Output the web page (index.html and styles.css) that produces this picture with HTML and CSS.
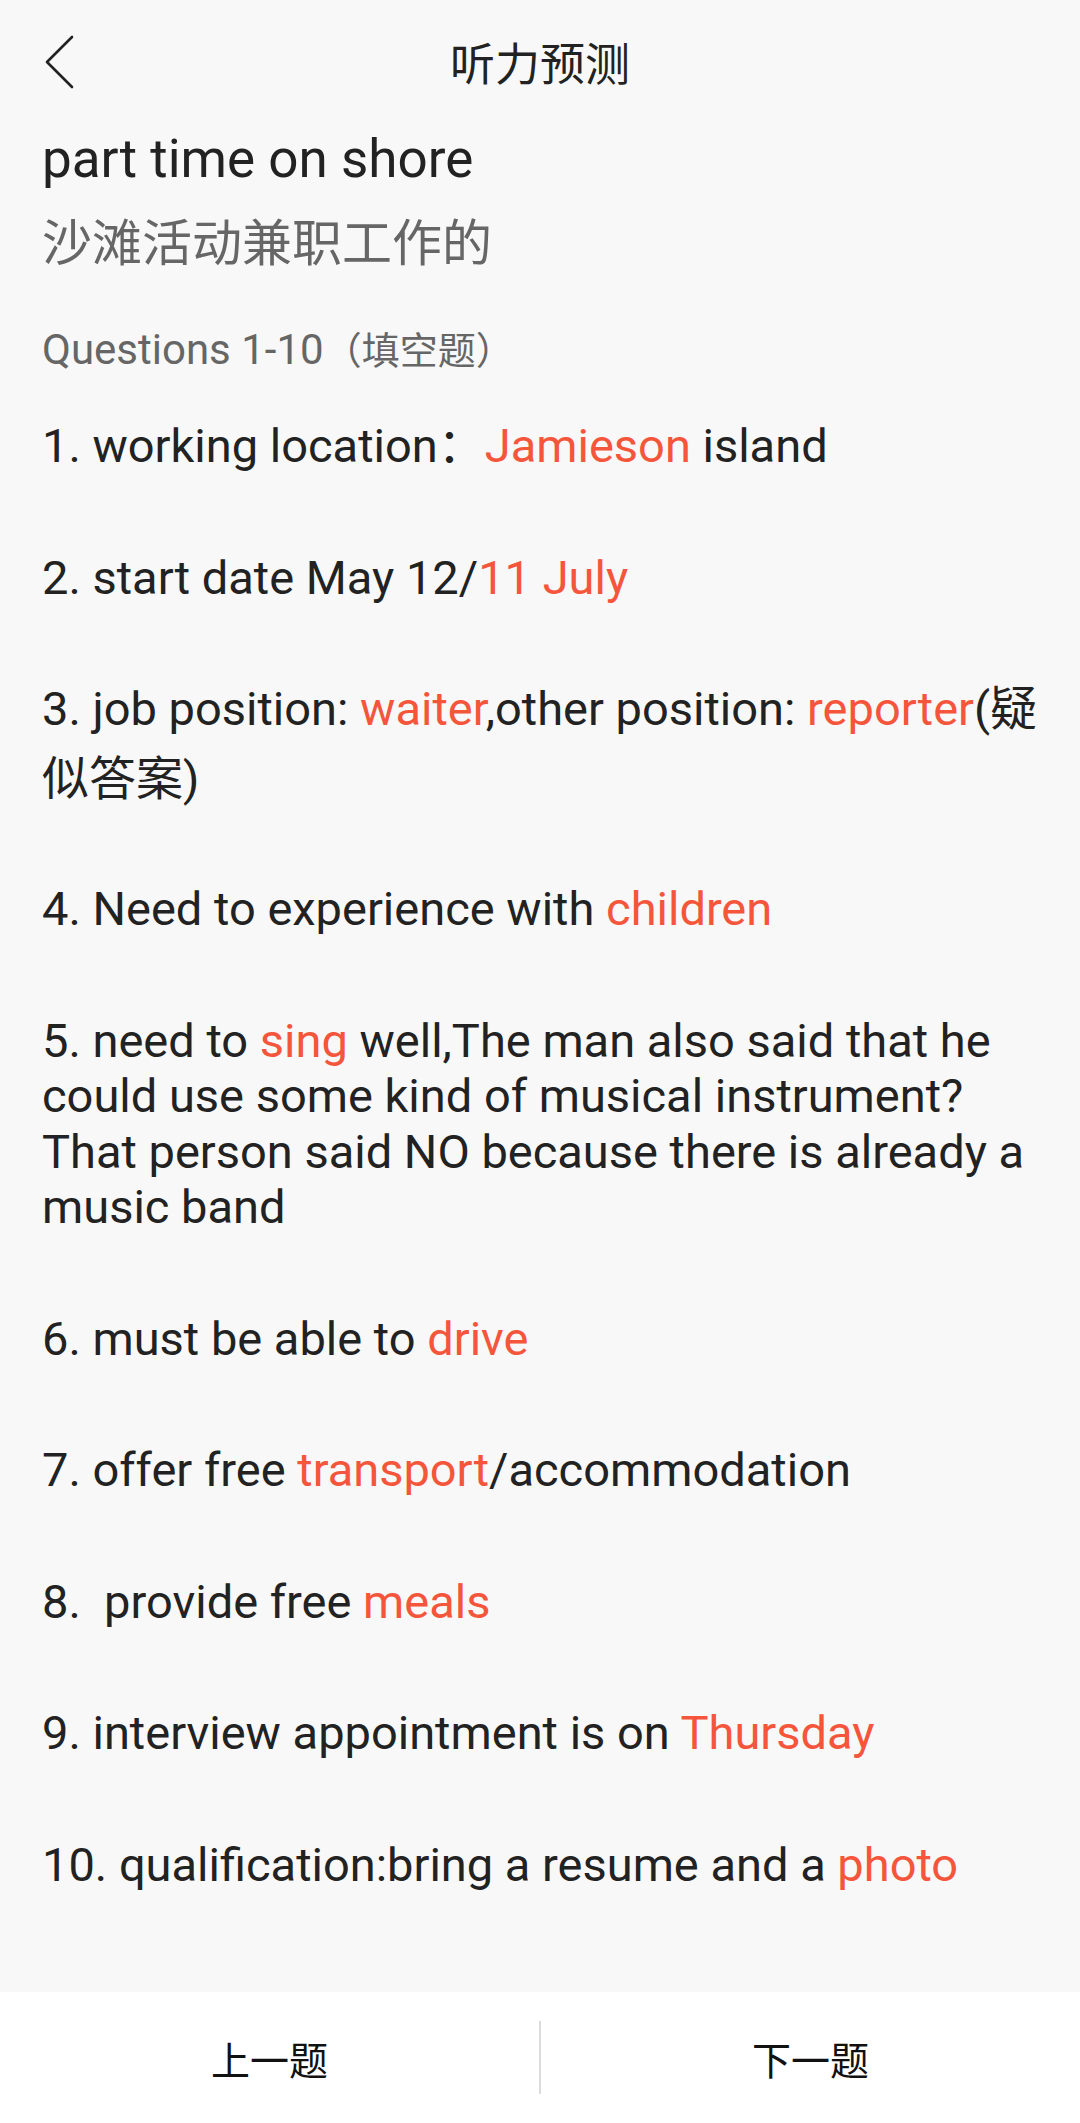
FILE: index.html
```html
<!DOCTYPE html>
<html lang="zh-CN">
<head>
<meta charset="utf-8">
<title>听力预测</title>
<link rel="stylesheet" href="styles.css">
</head>
<body>
<div class="page">
  <header class="topbar">
    <div class="back">
      <svg class="back-icon" width="30" height="54" viewBox="0 0 30 54" aria-hidden="true">
        <polyline points="27,2 2,27 27,52" fill="none" stroke="#222" stroke-width="2.6" stroke-linecap="round" stroke-linejoin="round"/>
      </svg>
    </div>
    <div class="title">听力预测</div>
    <div class="spacer"></div>
  </header>

  <main class="content">
    <h1 class="heading">part time on shore</h1>
    <div class="subtitle">沙滩活动兼职工作的</div>
    <div class="section">Questions 1-10<span class="section-cjk">（填空题）</span></div>

    <p class="item">1. working location：<span class="ans">Jamieson</span> island</p>
    <p class="item">2. start date May 12/<span class="ans">11 July</span></p>
    <p class="item item-cjk">3. job position: <span class="ans">waiter</span>,other position: <span class="ans">reporter</span>(疑似答案)</p>
    <p class="item">4. Need to experience with <span class="ans">children</span></p>
    <p class="item">5. need to <span class="ans">sing</span> well,The man also said that he could use some kind of musical instrument? That person said NO because there is already a music band</p>
    <p class="item">6. must be able to <span class="ans">drive</span></p>
    <p class="item">7. offer free <span class="ans">transport</span>/accommodation</p>
    <p class="item">8.&nbsp; provide free <span class="ans">meals</span></p>
    <p class="item">9. interview appointment is on <span class="ans">Thursday</span></p>
    <p class="item">10. qualification:bring a resume and a <span class="ans">photo</span></p>
  </main>

  <footer class="bottombar">
    <div class="btn">上一题</div>
    <div class="divider"></div>
    <div class="btn">下一题</div>
  </footer>
</div>
</body>
</html>
```

FILE: styles.css
```css
html, body {
  margin: 0;
  padding: 0;
}

body {
  background: #f8f8f8;
  color: #222;
  font-family: Roboto, "Noto Sans CJK SC", sans-serif;
}

.page {
  display: flex;
  flex-direction: column;
  min-height: 2123px;
}

.topbar {
  display: grid;
  grid-template-columns: 1fr auto 1fr;
  align-items: center;
  height: 124px;
}

.back {
  display: flex;
  align-items: center;
  padding-left: 45px;
}

.back-icon {
  display: block;
}

.title {
  font-family: "Noto Sans CJK SC", sans-serif;
  font-size: 45px;
  line-height: 60px;
  color: #222;
}

.content {
  flex: 1;
  padding: 0 42px;
}

.heading {
  margin: 3px 0 0;
  font-size: 53px;
  font-weight: 400;
  line-height: 64px;
  color: #222;
}

.subtitle {
  margin-top: 16px;
  font-family: "Noto Sans CJK SC", sans-serif;
  font-size: 50px;
  line-height: 64px;
  color: #666;
}

.section {
  margin-top: 54px;
  font-size: 42px;
  line-height: 50px;
  color: #666;
}

.section-cjk {
  font-size: 38px;
}

.item {
  margin: 42px 0 76px;
  font-size: 47px;
  line-height: 55.5px;
  color: #222;
}

.item + .item {
  margin-top: 0;
}

.item.item-cjk {
  margin-top: -7px;
  margin-bottom: 67px;
  line-height: 70px;
}

.ans {
  color: #f5553b;
}

.bottombar {
  display: grid;
  grid-template-columns: 1fr 2px 1fr;
  align-items: center;
  height: 131px;
  background: #fff;
}

.btn {
  text-align: center;
  font-family: "Noto Sans CJK SC", sans-serif;
  font-size: 39px;
  line-height: 50px;
  color: #111;
}

.divider {
  height: 73px;
  background: #dcdcdc;
}
```
